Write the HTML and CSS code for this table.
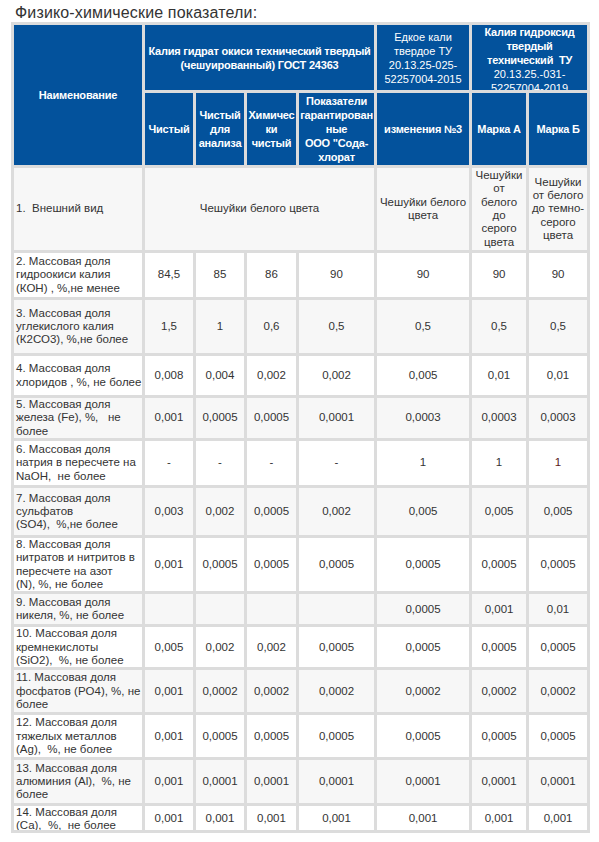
FILE: index.html
```html
<!DOCTYPE html>
<html lang="ru">
<head>
    <meta charset="UTF-8">
    <meta name="viewport" content="width=device-width, initial-scale=1.0">
    <title>Физико-химические показатели</title>
    <link rel="stylesheet" href="styles.css">
</head>
<body>
    <div class="page">
        <h2 class="title">Физико-химические показатели:</h2>

        <table class="specs">
            <colgroup>
                <col class="c-name">
                <col class="c-48">
                <col class="c-48">
                <col class="c-49">
                <col class="c-75">
                <col class="c-92">
                <col class="c-54">
                <col class="c-58">
            </colgroup>
            <thead>
                <tr class="h-65">
                    <th rowspan="2">Наименование</th>
                    <th colspan="4">Калия гидрат окиси технический твердый<br>(чешуированный) ГОСТ 24363</th>
                    <th class="thin">Едкое кали твердое ТУ 20.13.25-025-52257004-2015</th>
                    <th colspan="2"><div class="clip">Калия гидроксид твердый технический&nbsp; ТУ <span class="thin">20.13.25.-031-52257004-2019</span></div></th>
                </tr>
                <tr class="h-72">
                    <th>Чистый</th>
                    <th>Чистый для анализа</th>
                    <th>Химически чистый</th>
                    <th>Показатели гарантированные<br>ООО "Сода-хлорат</th>
                    <th>изменения №3</th>
                    <th>Марка А</th>
                    <th>Марка Б</th>
                </tr>
            </thead>
            <tbody>
                <tr class="h-82">
                    <td class="name">1.&nbsp; Внешний вид</td>
                    <td colspan="4">Чешуйки белого цвета</td>
                    <td>Чешуйки белого цвета</td>
                    <td>Чешуйки от белого до серого цвета</td>
                    <td>Чешуйки от белого до темно-серого цвета</td>
                </tr>
                <tr class="h-44">
                    <td class="name">2. Массовая доля гидроокиси калия<br>(КОН) , %,не менее</td>
                    <td>84,5</td><td>85</td><td>86</td><td>90</td><td>90</td><td>90</td><td>90</td>
                </tr>
                <tr class="h-53">
                    <td class="name">3. Массовая доля углекислого калия<br>(К2СО3), %,не более</td>
                    <td>1,5</td><td>1</td><td>0,6</td><td>0,5</td><td>0,5</td><td>0,5</td><td>0,5</td>
                </tr>
                <tr class="h-39">
                    <td class="name">4. Массовая доля хлоридов , %, не более</td>
                    <td>0,008</td><td>0,004</td><td>0,002</td><td>0,002</td><td>0,005</td><td>0,01</td><td>0,01</td>
                </tr>
                <tr class="h-40">
                    <td class="name">5. Массовая доля железа (Fe), %, &nbsp; не более</td>
                    <td>0,001</td><td>0,0005</td><td>0,0005</td><td>0,0001</td><td>0,0003</td><td>0,0003</td><td>0,0003</td>
                </tr>
                <tr class="h-44">
                    <td class="name">6. Массовая доля натрия в пересчете на NaOH,&nbsp; не более</td>
                    <td>-</td><td>-</td><td>-</td><td>-</td><td>1</td><td>1</td><td class="red">1</td>
                </tr>
                <tr class="h-47">
                    <td class="name">7. Массовая доля сульфатов<br>(SO4),&nbsp; %,не более</td>
                    <td>0,003</td><td>0,002</td><td>0,0005</td><td>0,002</td><td>0,005</td><td>0,005</td><td>0,005</td>
                </tr>
                <tr class="h-53">
                    <td class="name">8. Массовая доля нитратов и нитритов в пересчете на азот<br>(N), %, не более</td>
                    <td>0,001</td><td>0,0005</td><td>0,0005</td><td>0,0005</td><td>0,0005</td><td>0,0005</td><td>0,0005</td>
                </tr>
                <tr class="h-30">
                    <td class="name">9. Массовая доля никеля, %, не более</td>
                    <td></td><td></td><td></td><td></td><td>0,0005</td><td>0,001</td><td>0,01</td>
                </tr>
                <tr class="h-40">
                    <td class="name">10. Массовая доля кремнекислоты<br>(SiO2),&nbsp; %, не более</td>
                    <td>0,005</td><td>0,002</td><td>0,002</td><td>0,0005</td><td>0,0005</td><td>0,0005</td><td>0,0005</td>
                </tr>
                <tr class="h-42">
                    <td class="name">11. Массовая доля фосфатов (PO4), %, не более</td>
                    <td>0,001</td><td>0,0002</td><td>0,0002</td><td>0,0002</td><td>0,0002</td><td>0,0002</td><td>0,0002</td>
                </tr>
                <tr class="h-42">
                    <td class="name">12. Массовая доля тяжелых металлов<br>(Ag),&nbsp; %, не более</td>
                    <td>0,001</td><td>0,0005</td><td>0,0005</td><td>0,0005</td><td>0,0005</td><td>0,0005</td><td>0,0005</td>
                </tr>
                <tr class="h-43">
                    <td class="name">13. Массовая доля алюминия (Al),&nbsp; %, не более</td>
                    <td>0,001</td><td>0,0001</td><td>0,0001</td><td>0,0001</td><td>0,0001</td><td>0,0001</td><td>0,0001</td>
                </tr>
                <tr class="h-24">
                    <td class="name"><div class="clip-last">14. Массовая доля (Ca),&nbsp; %,&nbsp; не более</div></td>
                    <td>0,001</td><td>0,001</td><td>0,001</td><td>0,001</td><td>0,001</td><td>0,001</td><td>0,001</td>
                </tr>
            </tbody>
        </table>
    </div>
</body>
</html>
```
FILE: styles.css
```css
body {
    margin: 0;
    background: #fff;
    font-family: Arial, "Liberation Sans", sans-serif;
    color: #333;
}

.page {
    padding: 0 9px 0 11px;
}

.title {
    margin: 0;
    padding: 4px 0 0 4px;
    font-size: 16px;
    font-weight: normal;
    line-height: 18px;
    letter-spacing: 0.15px;
    color: #333;
}

.specs {
    width: 579px;
    table-layout: fixed;
    border-collapse: separate;
    border-spacing: 3px;
    background: #dcdcdc;
    font-size: 11.5px;
    line-height: 13.3px;
}

.c-name { width: 128px; }
.c-48 { width: 48px; }
.c-49 { width: 49px; }
.c-75 { width: 75px; }
.c-92 { width: 92px; }
.c-54 { width: 54px; }
.c-58 { width: 58px; }

.specs th,
.specs td {
    padding: 0 2px;
    text-align: center;
    vertical-align: middle;
    word-wrap: break-word;
}

.specs th {
    padding: 0 1px;
    background: #03529c;
    color: #fff;
    font-size: 11px;
    font-weight: bold;
    line-height: 14px;
    letter-spacing: -0.2px;
}

.specs th.thin,
.specs th .thin {
    font-weight: normal;
    letter-spacing: 0;
}

.specs td {
    background: #fff;
    color: #333;
}

.specs tbody tr:nth-child(odd) td {
    background: #f7f7f7;
}

.specs td.name {
    padding: 0 0 0 2px;
    text-align: left;
}

.specs td.red {
    color: #5a1a1a;
}

.clip {
    max-height: 65px;
    overflow: hidden;
}

.clip-last {
    max-height: 24px;
    overflow: hidden;
}

.h-65 { height: 65px; }
.h-72 { height: 72px; }
.h-82 { height: 82px; }
.h-44 { height: 44px; }
.h-53 { height: 53px; }
.h-39 { height: 39px; }
.h-40 { height: 40px; }
.h-47 { height: 47px; }
.h-30 { height: 30px; }
.h-42 { height: 42px; }
.h-43 { height: 43px; }
.h-24 { height: 24px; }
```
